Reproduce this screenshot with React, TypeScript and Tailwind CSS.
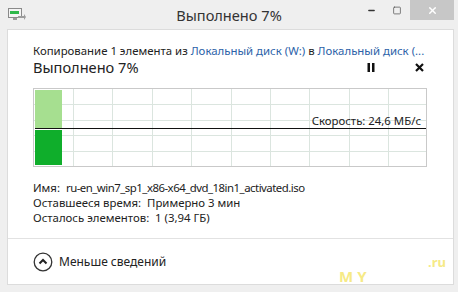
import { Minus, Square, X } from 'lucide-react';

const font = { fontFamily: '"Noto Sans", "Open Sans", sans-serif' };

function TitleIcon() {
  return (
    <svg width="18" height="14" viewBox="0 0 18 14">
      <rect x="0.5" y="0.5" width="13" height="9" fill="#f4f4f4" stroke="#8a8a8a" />
      <rect x="2" y="3" width="9" height="3" fill="#2fb84a" />
      <rect x="5" y="10" width="4" height="2" fill="#9a9a9a" />
      <path d="M10 8 L16 8 L16 6 L18 9 L16 12 L16 10 L10 10 Z" fill="#9c9c9c" />
    </svg>
  );
}

function Chart() {
  const cols = [40, 79, 119, 158, 198, 237, 276, 316, 355];
  const rows = [16, 32, 47, 63];
  return (
    <div className="relative w-[394px] h-[79px] border border-[#c9c9c9] bg-white">
      <svg className="absolute inset-0" width="392" height="77" viewBox="0 0 392 77">
        {cols.map((x) => (
          <line key={x} x1={x - 0.5} y1="0" x2={x - 0.5} y2="77" stroke="#dbe5df" strokeWidth="1" />
        ))}
        {rows.map((y) => (
          <line key={y} x1="0" y1={y - 0.5} x2="392" y2={y - 0.5} stroke="#dbe5df" strokeWidth="1" />
        ))}
        <rect x="1" y="1" width="27" height="39" fill="#a6df90" />
        <rect x="1" y="41" width="27" height="35" fill="#0fae2b" />
        <line x1="1" y1="39.5" x2="392" y2="39.5" stroke="#111" strokeWidth="1.2" />
      </svg>
      <span className="absolute right-[5px] top-[24px] text-[11.4px] leading-[15px] text-[#222]">
        Скорость: 24,6 МБ/с
      </span>
    </div>
  );
}

export default function App() {
  return (
    <div className="relative w-[458px] h-[292px] bg-[#efefef] flex flex-col overflow-hidden" style={font}>
      {/* title bar */}
      <div className="relative h-[29px] flex items-start shrink-0">
        <div className="pl-[8px] pt-[8px]">
          <TitleIcon />
        </div>
        <div className="absolute left-0 right-0 top-[5px] text-center text-[14.6px] leading-[20px] text-[#333]">
          Выполнено 7%
        </div>
        <div className="ml-auto mr-[4px] flex items-start">
          <div className="w-[26px] h-[20px] flex items-center justify-center">
            <Minus className="w-[9px] h-[9px] text-[#333]" strokeWidth={4} />
          </div>
          <div className="w-[26px] h-[20px] flex items-center justify-center">
            <Square className="w-[10px] h-[9px] text-[#555]" strokeWidth={2} />
          </div>
          <div className="w-[44px] h-[20px] bg-[#c7c7c7] flex items-center justify-center">
            <X className="w-[11px] h-[11px] text-white" strokeWidth={3} />
          </div>
        </div>
      </div>

      {/* content panel */}
      <div className="ml-[7px] mr-[4px] h-[256px] bg-white border border-[#dcdcdc] flex flex-col">
        <div className="pl-[25px] pr-[10px] pt-[13px]">
          <div className="text-[11.4px] leading-[15px] text-[#222] whitespace-nowrap">
            Копирование 1 элемента из <span className="text-[#2c62a8]">Локальный диск (W:)</span> в{' '}
            <span className="text-[#2c62a8]">Локальный диск (...</span>
          </div>
          <div className="h-[19px] flex items-center pr-[19px]">
            <span className="text-[14.6px] leading-[19px] text-[#222]">Выполнено 7%</span>
            <div className="ml-auto flex items-center gap-[40px]">
              <svg width="8" height="9" viewBox="0 0 8 9">
                <rect x="0.5" y="0" width="2.5" height="9" fill="#111" />
                <rect x="5" y="0" width="2.5" height="9" fill="#111" />
              </svg>
              <svg width="9" height="9" viewBox="0 0 9 9">
                <path d="M1 1 L8 8 M8 1 L1 8" stroke="#111" strokeWidth="2.2" />
              </svg>
            </div>
          </div>
          <div className="mt-[11px]">
            <Chart />
          </div>
          <div className="mt-[13px] text-[11.4px] leading-[15px] text-[#222] whitespace-nowrap">
            <div>
              Имя:&nbsp; <span className="tracking-[-0.5px]">ru-en_win7_sp1_x86-x64_dvd_18in1_activated.iso</span>
            </div>
            <div>Оставшееся время:&nbsp; Примерно 3 мин</div>
            <div>Осталось элементов:&nbsp; 1 (3,94 ГБ)</div>
          </div>
        </div>
        <div className="mt-[13px] border-t border-[#e2e2e2] flex-1 flex items-center pl-[25px]">
          <div className="flex items-center gap-[6px]">
            <svg width="20" height="20" viewBox="0 0 20 20">
              <circle cx="10" cy="10" r="8.8" fill="none" stroke="#333" strokeWidth="1.3" />
              <path d="M6.5 11.5 L10 8 L13.5 11.5" fill="none" stroke="#222" strokeWidth="2" />
            </svg>
            <span className="text-[12px] leading-[16px] text-[#222]">Меньше сведений</span>
          </div>
        </div>
      </div>

      {/* watermark */}
      <span className="absolute left-[339px] top-[265px] text-[15px] font-bold tracking-[4px] text-[#f6ea86]">MY</span>
      <span className="absolute left-[428px] top-[253px] text-[13px] font-bold text-[#f6ea86]">.ru</span>
    </div>
  );
}
